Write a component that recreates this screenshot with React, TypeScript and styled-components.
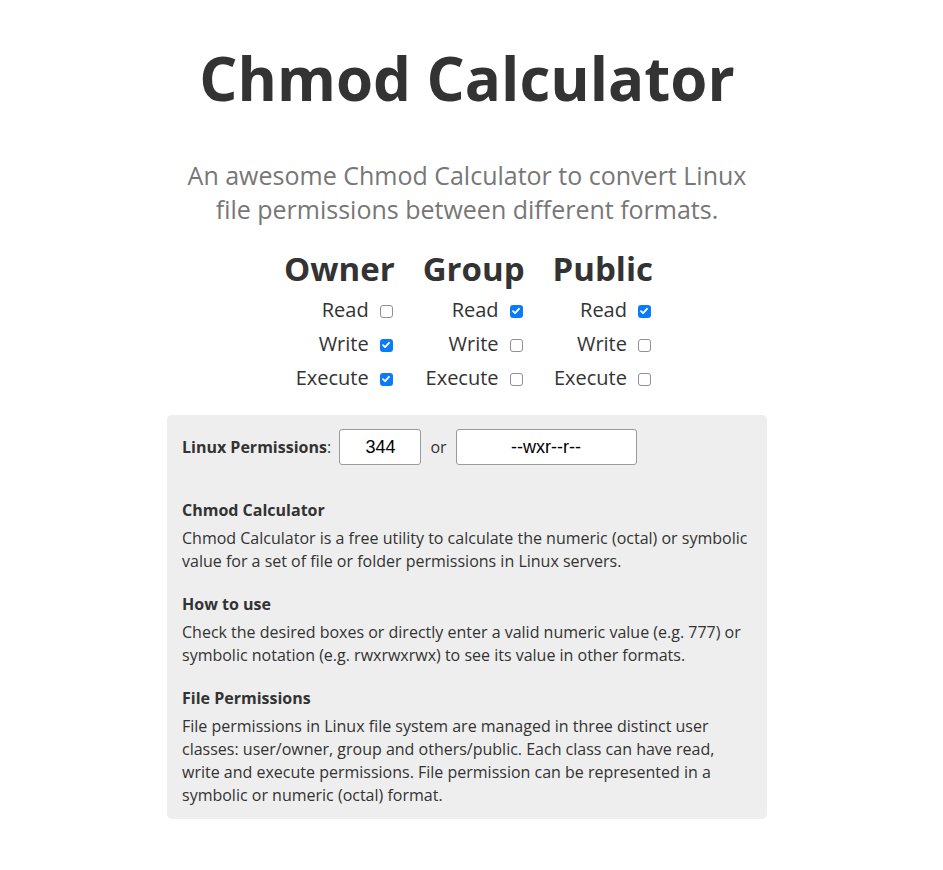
import React from "react";
import styled, { createGlobalStyle } from "styled-components";

const Global = createGlobalStyle`
  html, body { margin: 0; padding: 0; background: #fff; }
  body {
    font-family: "Open Sans", "Liberation Sans", sans-serif;
    color: #333;
    padding-right: 9px;
  }
  * { box-sizing: border-box; }
`;

const Page = styled.main`
  display: flex;
  flex-direction: column;
  align-items: center;
  padding-top: 37px;
`;

const Title = styled.h1`
  margin: 0;
  font-size: 60px;
  font-weight: 700;
  line-height: 82px;
  color: #333;
`;

const Subtitle = styled.p`
  margin: 39px 0 0;
  width: 580px;
  text-align: center;
  font-size: 25px;
  line-height: 34px;
  color: #777;
`;

const Grid = styled.div`
  display: grid;
  grid-template-columns: repeat(3, auto);
  column-gap: 28px;
  margin-top: 20px;
  margin-left: 3px;
`;

const Column = styled.div`
  display: flex;
  flex-direction: column;
  align-items: flex-end;
`;

const ColHead = styled.div`
  font-size: 33px;
  font-weight: 700;
  line-height: 46px;
  margin-bottom: 1px;
  color: #333;
`;

const Row = styled.label`
  display: flex;
  align-items: center;
  gap: 11px;
  font-size: 20px;
  line-height: 34px;
  color: #333;
  padding-right: 2px;
`;

const Box = styled.span<{ $on: boolean }>`
  width: 13px;
  height: 13px;
  border-radius: 3px;
  display: inline-flex;
  align-items: center;
  justify-content: center;
  background: ${(p) => (p.$on ? "#0b7bfc" : "#fff")};
  border: ${(p) => (p.$on ? "none" : "1.5px solid #8f8f96")};
  margin-top: 2px;
`;

const Panel = styled.section`
  width: 600px;
  margin-top: 20px;
  background: #eee;
  border-radius: 5px;
  padding: 14px 15px 12px;
`;

const PermRow = styled.div`
  display: flex;
  align-items: center;
  font-size: 16px;
  color: #333;
  margin-bottom: 34px;
`;

const PermLabel = styled.span`
  font-weight: 700;
`;

const Field = styled.div<{ $w: number }>`
  width: ${(p) => p.$w}px;
  height: 36px;
  background: #fff;
  border: 1px solid #9a9a9a;
  border-radius: 3px;
  display: flex;
  align-items: center;
  justify-content: center;
  font-family: "Liberation Sans", Arial, sans-serif;
  font-size: 18px;
  color: #000;
`;

const Or = styled.span`
  margin: 0 9px 0 9px;
  font-size: 16px;
`;

const Section = styled.div`
  margin-top: 20px;
`;

const SecHead = styled.h3`
  margin: 0 0 5px;
  font-size: 16px;
  font-weight: 700;
  line-height: 23px;
  color: #333;
`;

const SecText = styled.p`
  margin: 0;
  font-size: 16px;
  line-height: 23px;
  color: #333;
`;

const Check = ({ on }: { on: boolean }) => (
  <Box $on={on}>
    {on && (
      <svg width="10" height="10" viewBox="0 0 10 10">
        <path d="M2 5.2 L4.1 7.2 L8 2.8" fill="none" stroke="#fff" strokeWidth="1.8" strokeLinecap="round" strokeLinejoin="round" />
      </svg>
    )}
  </Box>
);

const cols = [
  { name: "Owner", v: [false, true, true] },
  { name: "Group", v: [true, false, false] },
  { name: "Public", v: [true, false, false] },
];
const labels = ["Read", "Write", "Execute"];

const sections = [
  {
    h: "Chmod Calculator",
    t: "Chmod Calculator is a free utility to calculate the numeric (octal) or symbolic value for a set of file or folder permissions in Linux servers.",
  },
  {
    h: "How to use",
    t: "Check the desired boxes or directly enter a valid numeric value (e.g. 777) or symbolic notation (e.g. rwxrwxrwx) to see its value in other formats.",
  },
  {
    h: "File Permissions",
    t: "File permissions in Linux file system are managed in three distinct user classes: user/owner, group and others/public. Each class can have read, write and execute permissions. File permission can be represented in a symbolic or numeric (octal) format.",
  },
];

export default function App() {
  return (
    <>
      <Global />
      <Page>
        <Title>Chmod Calculator</Title>
        <Subtitle>An awesome Chmod Calculator to convert Linux file permissions between different formats.</Subtitle>
        <Grid>
          {cols.map((c) => (
            <Column key={c.name}>
              <ColHead>{c.name}</ColHead>
              {labels.map((l, i) => (
                <Row key={l}>
                  {l}
                  <Check on={c.v[i]} />
                </Row>
              ))}
            </Column>
          ))}
        </Grid>
        <Panel>
          <PermRow>
            <PermLabel>Linux Permissions</PermLabel>:&nbsp;&nbsp;
            <Field $w={82}>344</Field>
            <Or>or</Or>
            <Field $w={181}>--wxr--r--</Field>
          </PermRow>
          {sections.map((s) => (
            <Section key={s.h}>
              <SecHead>{s.h}</SecHead>
              <SecText>{s.t}</SecText>
            </Section>
          ))}
        </Panel>
      </Page>
    </>
  );
}
